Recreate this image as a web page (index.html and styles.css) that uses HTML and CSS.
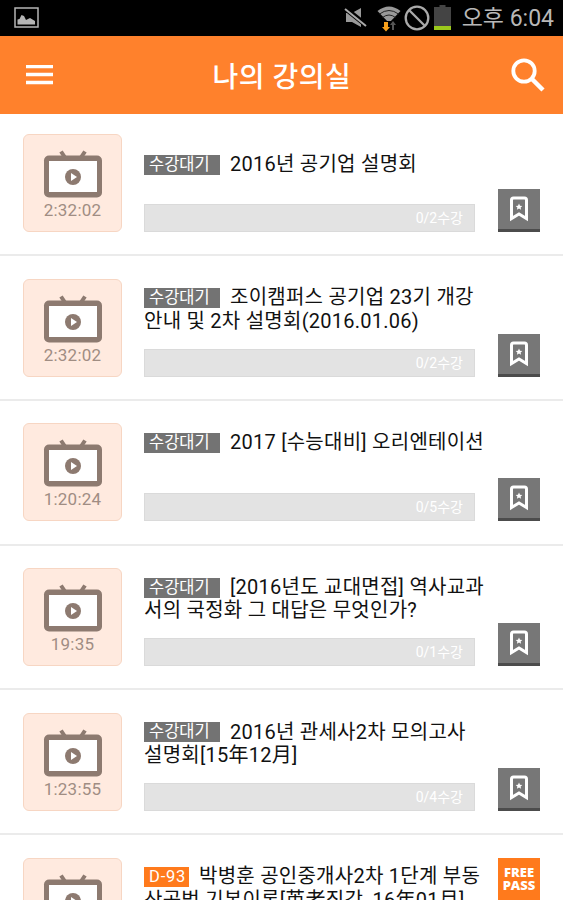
FILE: index.html
```
<!DOCTYPE html>
<html lang="ko">
<head>
<meta charset="utf-8">
<title>나의 강의실</title>
<link rel="stylesheet" href="styles.css">
</head>
<body>
<svg class="defs" width="0" height="0">
  <symbol id="tv" viewBox="0 0 60 50">
    <path d="M18 1.500l4 6M42 1.500l-4 6" fill="none" stroke="#8d7a70" stroke-width="4"/>
    <rect x="1" y="5.500" width="58" height="42" rx="5" fill="#8d7a70"/>
    <path d="M6 11h48v31H6z" fill="#fff"/>
    <circle cx="30" cy="27" r="8" fill="#8d7a70"/>
    <path d="M28 23v8l6-4z" fill="#fff"/>
  </symbol>
  <symbol id="mark" viewBox="0 0 20 26">
    <path d="M4.500 2h11q2 0 2 2v18.500L10 18l-7.500 4.500V4q0-2 2-2z" fill="none" stroke="#fff" stroke-width="3"/>
    <path d="M10 7.500l1 2.200 2.300.2-1.700 1.600.5 2.300-2.100-1.200-2.100 1.200.5-2.300L6.700 9.900l2.300-.2z" fill="#fff"/>
  </symbol>
</svg>
<div class="screen">
  <div class="status">
    <svg class="shot" width="26" height="22" viewBox="0 0 26 22"><rect x="1" y="1" width="23" height="19" fill="none" stroke="#b5b5b5" stroke-width="1.500"/><path d="M3.500 17.500v-5l2-.5 2-4 2.500 1 2 4 4-2 5 3v3.500z" fill="#b5b5b5"/></svg>
    <svg class="mute" width="24" height="22" viewBox="0 0 24 22"><path d="M2 6h6l9-5v19l-9-5H2z" fill="#999"/><path d="M2 2l20 16" stroke="#000" stroke-width="5"/><path d="M1 2l21 17" stroke="#aaa" stroke-width="2"/></svg>
    <svg class="wifi" width="26" height="27" viewBox="0 0 26 27"><path d="M1.500 6Q13-3 24.500 6L13 18z" fill="#999"/><path d="M3.500 9Q13 2 22.500 9M6.500 12.500q6.500-5 13 0" fill="none" stroke="#222" stroke-width="1"/><path d="M6 16h14v11H6z" fill="#000"/><path d="M8 17h4v5h2l-4 4.500L6 22h2z" fill="#f9a01b"/><path d="M16 25v-5h-2l3-4 3 4h-2v5z" fill="#555"/></svg>
    <svg class="block" width="26" height="26" viewBox="0 0 26 26"><circle cx="13" cy="13" r="11.300" fill="none" stroke="#aaa" stroke-width="2.300"/><path d="M5 5l16 16" stroke="#aaa" stroke-width="2.300"/></svg>
    <svg class="battery" width="18" height="26" viewBox="0 0 18 26"><path d="M5.500 0h6v2H17v19H0V2h5.500z" fill="#444"/><path d="M0 21h17v4H0z" fill="#9bc91c"/></svg>
    <span class="clock">오후 6:04</span>
  </div>
  <header class="bar">
    <svg width="27" height="20" viewBox="0 0 27 20"><path d="M0 1.600h27M0 9.600h27M0 17.400h27" stroke="#fff" stroke-width="3.500"/></svg>
    <h1>나의 강의실</h1>
    <svg width="34" height="34" viewBox="0 0 34 34"><circle cx="13" cy="13" r="10.700" fill="none" stroke="#fff" stroke-width="3.800"/><path d="M20.500 20.500l11.500 11.500" stroke="#fff" stroke-width="4.500"/></svg>
  </header>
  <main class="list">
    <article class="row">
      <div class="thumb"><svg><use href="#tv"/></svg><span>2:32:02</span></div>
      <div class="info">
        <div class="title"><p><b class="tag">수강대기</b>2016년 공기업 설명회</p></div>
        <div class="progress">0/2수강</div>
      </div>
      <div class="save"><svg><use href="#mark"/></svg></div>
    </article>
    <article class="row">
      <div class="thumb"><svg><use href="#tv"/></svg><span>2:32:02</span></div>
      <div class="info">
        <div class="title"><p><b class="tag">수강대기</b>조이캠퍼스 공기업 23기 개강</p><p>안내 및 2차 설명회(2016.01.06)</p></div>
        <div class="progress">0/2수강</div>
      </div>
      <div class="save"><svg><use href="#mark"/></svg></div>
    </article>
    <article class="row">
      <div class="thumb"><svg><use href="#tv"/></svg><span>1:20:24</span></div>
      <div class="info">
        <div class="title"><p><b class="tag">수강대기</b>2017 [수능대비] 오리엔테이션</p><p></p></div>
        <div class="progress">0/5수강</div>
      </div>
      <div class="save"><svg><use href="#mark"/></svg></div>
    </article>
    <article class="row">
      <div class="thumb"><svg><use href="#tv"/></svg><span>19:35</span></div>
      <div class="info">
        <div class="title"><p><b class="tag">수강대기</b>[2016년도 교대면접] 역사교과</p><p>서의 국정화 그 대답은 무엇인가?</p></div>
        <div class="progress">0/1수강</div>
      </div>
      <div class="save"><svg><use href="#mark"/></svg></div>
    </article>
    <article class="row">
      <div class="thumb"><svg><use href="#tv"/></svg><span>1:23:55</span></div>
      <div class="info">
        <div class="title"><p><b class="tag">수강대기</b>2016년 관세사2차 모의고사</p><p>설명회[15年12月]</p></div>
        <div class="progress">0/4수강</div>
      </div>
      <div class="save"><svg><use href="#mark"/></svg></div>
    </article>
    <article class="row">
      <div class="thumb"><svg><use href="#tv"/></svg></div>
      <div class="info">
        <div class="title"><p><b class="tag due">D-93</b>박병훈 공인중개사2차 1단계 부동</p><p>산공법 기본이론[英老직강, 16年01月]</p></div>
      </div>
      <div class="pass"><span>FREE</span><span>PASS</span></div>
    </article>
  </main>
</div>
</body>
</html>
```
FILE: styles.css
```
* { box-sizing: border-box; }
body { margin: 0; background: #fff; font-family: Roboto, "Noto Sans CJK KR", sans-serif; }
h1, p { margin: 0; }
svg { display: block; flex: none; }
.defs { position: absolute; }
.screen { width: 563px; height: 900px; overflow: hidden; }
.status { height: 36px; background: #000; display: flex; align-items: center; padding: 0 9px 0 14px; }
.shot { margin-right: auto; }
.mute { margin-right: 8px; }
.wifi { margin-right: 2px; }
.block { margin-right: 4px; }
.battery { margin-right: 10px; }
.clock { color: #b8b8b8; font-size: 23px; line-height: 34px; padding-top: 2px; white-space: nowrap; }
.bar { height: 78px; background: #ff812c; display: flex; align-items: center; justify-content: space-between; padding: 0 18px 0 26px; color: #fff; }
.bar h1 { font-size: 28px; font-weight: 500; line-height: 40px; padding-top: 6px; letter-spacing: .5px; white-space: nowrap; }
.row { height: 144.800px; display: flex; align-items: flex-start; padding: 22.700px 0 0 23px; border-bottom: 2px solid #ebebeb; }
.row:first-child { height: 142px; padding-top: 20px; }
.thumb { width: 99px; height: 98px; flex: none; border: 1px solid #f7d6c3; border-radius: 6px; background: #ffeadf; display: flex; flex-direction: column; align-items: center; padding-top: 15px; }
.thumb svg { width: 60px; height: 50px; }
.thumb span { color: #a08d83; font-size: 17px; line-height: 20px; letter-spacing: .2px; }
.info { width: 331px; height: 98px; margin-left: 22px; flex: none; display: flex; flex-direction: column; }
.title { height: 70px; padding-bottom: 9px; display: flex; flex-direction: column; justify-content: center; color: #111; font-size: 20px; line-height: 23.500px; letter-spacing: .25px; white-space: nowrap; }
.title p { height: 23.500px; display: flex; align-items: center; padding-top: 1px; }
.tag { width: 76px; height: 20px; margin-right: 10px; padding-left: 5px; flex: none; background: #737373; color: #fff; font-size: 16.500px; font-weight: 400; line-height: 20px; letter-spacing: 0; }
.due { width: 45px; background: #ff7a1c; letter-spacing: .8px; }
.progress { height: 28px; background: #e3e3e3; border: 1px solid #dadada; color: #fff; font-size: 14px; line-height: 27px; text-align: right; padding-right: 11px; }
.save { width: 42px; height: 43px; margin: 55px 0 0 23px; background: #777; border-bottom: 3px solid #4c4c4c; display: flex; align-items: center; justify-content: center; }
.save svg { width: 20px; height: 26px; }
.pass { width: 42px; height: 43px; margin-left: 23px; background: #ff7a1c; color: #fff; font: 800 13px "Open Sans", sans-serif; display: flex; flex-direction: column; align-items: center; padding-top: 8px; }
.pass span { height: 13.500px; line-height: 13.500px; }
```
